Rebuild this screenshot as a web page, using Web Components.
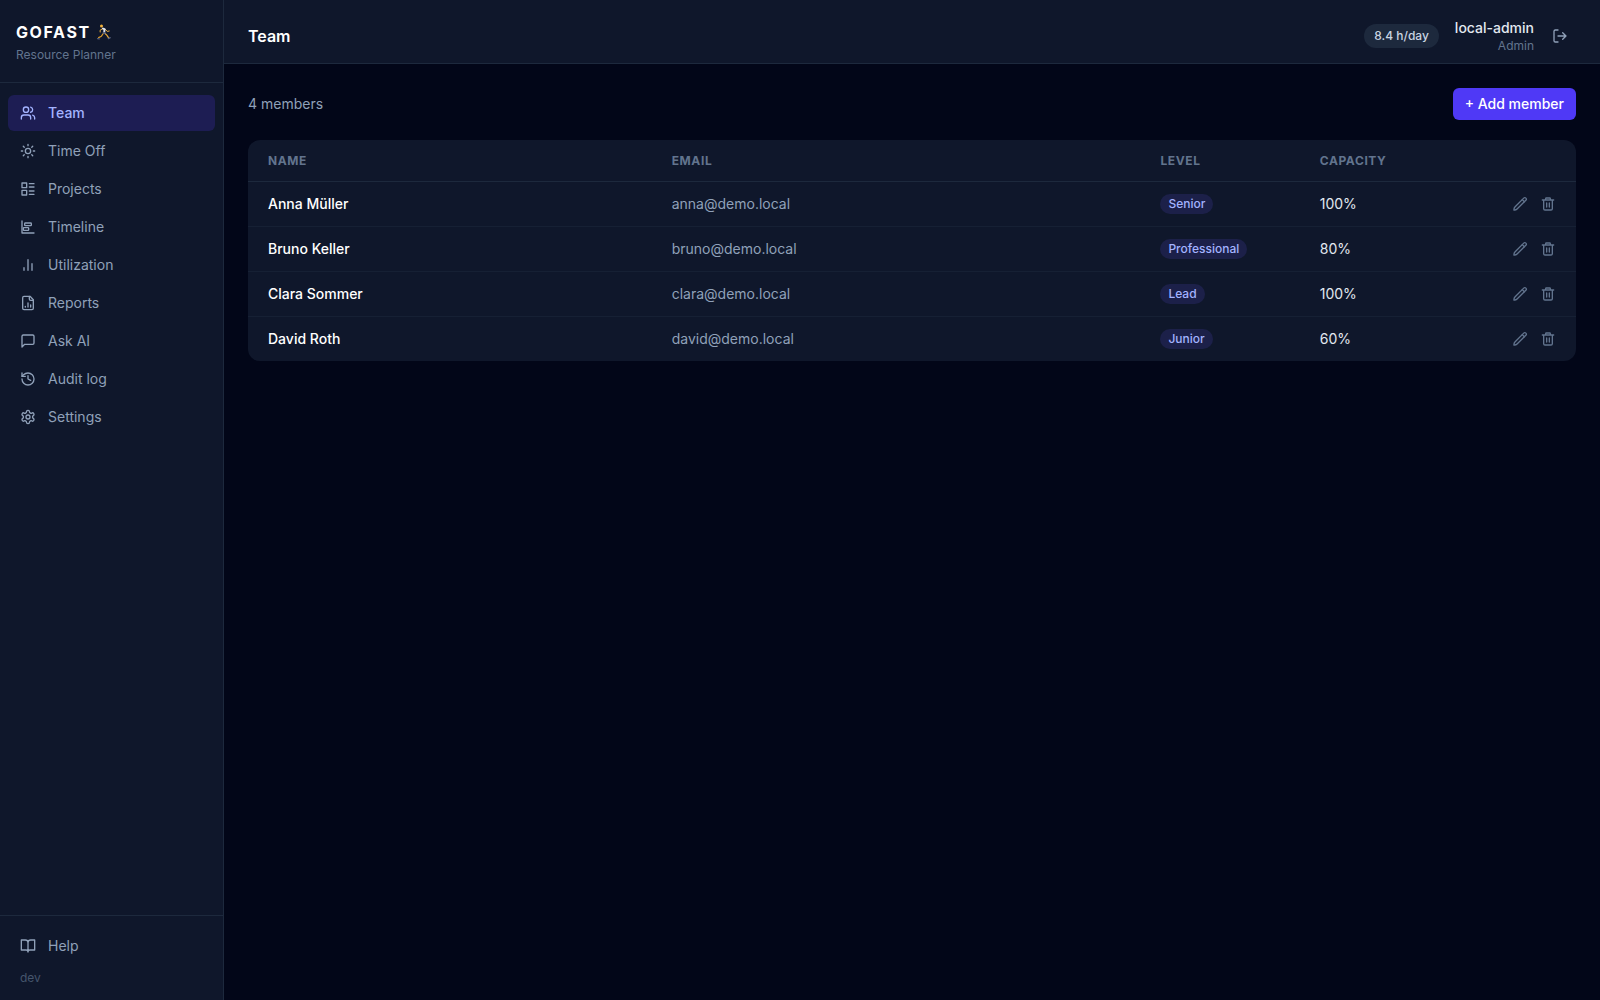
<!DOCTYPE html>
<html lang="en">
<head>
<meta charset="utf-8">
<title>Team - GOFAST Resource Planner</title>
<style>
  :root {
    --bg: #020618;
    --panel: #0f172b;
    --line: #1d293d;
    --text: #e2e8f0;
    --muted: #90a1b9;
    --dim: #62748e;
    --faint: #45556c;
    --accent: #4f39f6;
    --accent-text: #a3b3ff;
    --accent-bg: #1d1d53;
  }
  body {
    margin: 0;
    background: var(--bg);
    color: var(--text);
    font-family: Inter, "Liberation Sans", sans-serif;
    font-size: 14px;
    line-height: 20px;
    -webkit-font-smoothing: antialiased;
  }
</style>
</head>
<body>
<app-shell>
  <side-bar slot="sidebar">
    <nav-item icon="users" href="#team" active>Team</nav-item>
    <nav-item icon="sun" href="#time-off">Time Off</nav-item>
    <nav-item icon="projects" href="#projects">Projects</nav-item>
    <nav-item icon="timeline" href="#timeline">Timeline</nav-item>
    <nav-item icon="bars" href="#utilization">Utilization</nav-item>
    <nav-item icon="report" href="#reports">Reports</nav-item>
    <nav-item icon="chat" href="#ask">Ask AI</nav-item>
    <nav-item icon="history" href="#audit">Audit log</nav-item>
    <nav-item icon="settings" href="#settings">Settings</nav-item>
    <nav-item slot="footer" icon="book" href="#help">Help</nav-item>
    <span slot="version">dev</span>
  </side-bar>
  <top-bar slot="header" hours="8.4 h/day" user="local-admin" role-name="Admin">Team</top-bar>
  <team-page></team-page>
</app-shell>

<script>
const ICONS = {
  users: '<path d="M16 21v-2a4 4 0 0 0-4-4H6a4 4 0 0 0-4 4v2"/><circle cx="9" cy="7" r="4"/><path d="M22 21v-2a4 4 0 0 0-3-3.87"/><path d="M16 3.13a4 4 0 0 1 0 7.75"/>',
  sun: '<circle cx="12" cy="12" r="4"/><path d="M12 2v2M12 20v2M4.93 4.93l1.41 1.41M17.66 17.66l1.41 1.41M2 12h2M20 12h2M6.34 17.66l-1.41 1.41M19.07 4.93l-1.41 1.41"/>',
  projects: '<rect x="3" y="3" width="7" height="7"/><rect x="3" y="14" width="7" height="7"/><path d="M14 4h7M14 9h7M14 15h7M14 20h7"/>',
  timeline: '<path d="M3 3v18h18"/><rect x="7" y="6" width="10" height="4" rx="1"/><rect x="5" y="13" width="8" height="4" rx="1"/>',
  bars: '<path d="M6 20v-4M12 20V4M18 20V10"/>',
  report: '<path d="M15 2H6a2 2 0 0 0-2 2v16a2 2 0 0 0 2 2h12a2 2 0 0 0 2-2V7Z"/><path d="M14 2v4a2 2 0 0 0 2 2h4"/><path d="M8 18v-1M12 18v-6M16 18v-3"/>',
  chat: '<path d="M21 15a2 2 0 0 1-2 2H7l-4 4V5a2 2 0 0 1 2-2h14a2 2 0 0 1 2 2z"/>',
  history: '<path d="M3 12a9 9 0 1 0 9-9 9.75 9.75 0 0 0-6.74 2.74L3 8"/><path d="M3 3v5h5"/><path d="M12 7v5l4 2"/>',
  settings: '<path d="M12.22 2h-.44a2 2 0 0 0-2 2v.18a2 2 0 0 1-1 1.73l-.43.25a2 2 0 0 1-2 0l-.15-.08a2 2 0 0 0-2.73.73l-.22.38a2 2 0 0 0 .73 2.73l.15.1a2 2 0 0 1 1 1.72v.51a2 2 0 0 1-1 1.74l-.15.09a2 2 0 0 0-.73 2.73l.22.38a2 2 0 0 0 2.73.73l.15-.08a2 2 0 0 1 2 0l.43.25a2 2 0 0 1 1 1.73V20a2 2 0 0 0 2 2h.44a2 2 0 0 0 2-2v-.18a2 2 0 0 1 1-1.73l.43-.25a2 2 0 0 1 2 0l.15.08a2 2 0 0 0 2.73-.73l.22-.39a2 2 0 0 0-.73-2.73l-.15-.08a2 2 0 0 1-1-1.74v-.5a2 2 0 0 1 1-1.74l.15-.09a2 2 0 0 0 .73-2.73l-.22-.38a2 2 0 0 0-2.73-.73l-.15.08a2 2 0 0 1-2 0l-.43-.25a2 2 0 0 1-1-1.73V4a2 2 0 0 0-2-2z"/><circle cx="12" cy="12" r="3"/>',
  book: '<path d="M2 3h6a4 4 0 0 1 4 4v14a3 3 0 0 0-3-3H2zM22 3h-6a4 4 0 0 0-4 4v14a3 3 0 0 1 3-3h7z"/>',
  logout: '<path d="M9 21H5a2 2 0 0 1-2-2V5a2 2 0 0 1 2-2h4M16 17l5-5-5-5M21 12H9"/>',
  pencil: '<path d="M17.6 3.2a2.2 2.2 0 0 1 3.2 3.2L7.6 19.6c-1 1-3 1.6-4.6 1.5-.2-1.7.4-3.7 1.4-4.7Z"/><path d="m15.4 5.4 3.2 3.2"/>',
  trash: '<path d="M3.5 6h17M18.5 6v13a2 2 0 0 1-2 2h-9a2 2 0 0 1-2-2V6M8.5 6V4a1 1 0 0 1 1-1h5a1 1 0 0 1 1 1v2M10 10.5v6M14 10.5v6"/>'
};

class AppIcon extends HTMLElement {
  constructor() {
    super();
    this.attachShadow({ mode: 'open' });
  }

  connectedCallback() {
    this.shadowRoot.innerHTML = `
      <style>
        :host { display: block; flex: none; width: 16px; height: 16px; }
        svg { display: block; width: 100%; height: 100%; }
      </style>
      <svg viewBox="0 0 24 24" fill="none" stroke="currentColor" stroke-width="2"
        stroke-linecap="round" stroke-linejoin="round" aria-hidden="true">${ICONS[this.getAttribute('name')]}</svg>
    `;
  }
}

class AppShell extends HTMLElement {
  constructor() {
    super();
    this.attachShadow({ mode: 'open' });
    this.shadowRoot.innerHTML = `
      <style>
        :host { display: flex; min-height: 100vh; }
        .content { flex: 1; min-width: 0; display: flex; flex-direction: column; }
        main { flex: 1; padding: 24px; }
      </style>
      <slot name="sidebar"></slot>
      <div class="content">
        <slot name="header"></slot>
        <main><slot></slot></main>
      </div>
    `;
  }
}

class SideBar extends HTMLElement {
  constructor() {
    super();
    this.attachShadow({ mode: 'open' });
    this.shadowRoot.innerHTML = `
      <style>
        :host {
          display: flex;
          flex-direction: column;
          flex: none;
          box-sizing: border-box;
          width: 224px;
          background: var(--panel);
          border-right: 1px solid var(--line);
        }
        .brand {
          padding: 20px 16px 19px;
          border-bottom: 1px solid var(--line);
        }
        .name {
          display: flex;
          align-items: center;
          gap: 5px;
          color: #fff;
          font-size: 16px;
          font-weight: 700;
          line-height: 24px;
          letter-spacing: 0.1em;
        }
        .name svg { width: 16px; height: 16px; }
        .tagline {
          margin-top: 3px;
          color: var(--dim);
          font-size: 12px;
          line-height: 16px;
        }
        nav, .footer {
          display: flex;
          flex-direction: column;
          gap: 2px;
          padding: 12px 8px;
        }
        nav { flex: 1; }
        .footer { border-top: 1px solid var(--line); }
        .version {
          padding: 4px 12px 2px;
          color: var(--faint);
          font-size: 12px;
          line-height: 16px;
        }
      </style>
      <div class="brand">
        <div class="name">
          <span>GOFAST</span>
          <svg viewBox="0 0 16 16" fill="none" stroke-linecap="round" stroke-linejoin="round" aria-hidden="true">
            <path d="M7.6 9 5.4 12.2 2.6 13.6" stroke="#d99a2b" stroke-width="1.2"/>
            <path d="M8.6 9l2.2 2.2 2 3" stroke="#e8a93a" stroke-width="1.2"/>
            <path d="M6.6 4.6 4 6.4 4.2 8" stroke="#f0b23e" stroke-width="1"/>
            <path d="M9.4 5.4l1.8 2 2-.4" stroke="#f0b23e" stroke-width="1"/>
            <path d="M7 4.6l1.6.6-.4 3" stroke="#dfe6f2" stroke-width="2"/>
            <path d="M7.6 8.8l1 .3" stroke="#56617f" stroke-width="2"/>
            <path d="M1.6 14.6l1.6.2M12.4 14.6l1.8-.9" stroke="#56617f" stroke-width="1.3"/>
            <circle cx="5.5" cy="2" r="1.5" fill="#f2b13a"/>
          </svg>
        </div>
        <div class="tagline">Resource Planner</div>
      </div>
      <nav aria-label="Main"><slot></slot></nav>
      <div class="footer">
        <slot name="footer"></slot>
        <div class="version"><slot name="version"></slot></div>
      </div>
    `;
  }
}

class NavItem extends HTMLElement {
  constructor() {
    super();
    this.attachShadow({ mode: 'open' });
  }

  connectedCallback() {
    this.shadowRoot.innerHTML = `
      <style>
        :host { display: block; }
        a {
          display: flex;
          align-items: center;
          gap: 12px;
          padding: 8px 12px;
          border-radius: 6px;
          color: var(--muted);
          text-decoration: none;
        }
        a:hover { background: var(--line); }
        :host([active]) a {
          background: var(--accent-bg);
          color: var(--accent-text);
          font-weight: 500;
        }
      </style>
      <a href="${this.getAttribute('href')}">
        <app-icon name="${this.getAttribute('icon')}"></app-icon>
        <span><slot></slot></span>
      </a>
    `;
  }
}

class TopBar extends HTMLElement {
  constructor() {
    super();
    this.attachShadow({ mode: 'open' });
  }

  connectedCallback() {
    this.shadowRoot.innerHTML = `
      <style>
        :host {
          display: flex;
          align-items: center;
          justify-content: space-between;
          padding: 18px 24px 9px;
          background: var(--panel);
          border-bottom: 1px solid var(--line);
        }
        h1 {
          margin: 0;
          color: #fff;
          font-size: 16px;
          font-weight: 600;
          line-height: 24px;
        }
        .right { display: flex; align-items: center; gap: 16px; }
        .hours {
          padding: 4px 10px;
          border-radius: 12px;
          background: var(--line);
          color: #cad5e2;
          font-size: 12px;
          font-weight: 500;
          line-height: 16px;
        }
        .account { display: flex; align-items: center; gap: 10px; }
        .user { text-align: right; }
        .user strong { display: block; font-weight: 500; }
        .user small {
          display: block;
          color: var(--dim);
          font-size: 12px;
          line-height: 16px;
        }
        button {
          padding: 8px;
          border: none;
          border-radius: 6px;
          background: none;
          color: var(--muted);
          cursor: pointer;
        }
      </style>
      <h1><slot></slot></h1>
      <div class="right">
        <span class="hours">${this.getAttribute('hours')}</span>
        <div class="account">
          <div class="user">
            <strong>${this.getAttribute('user')}</strong>
            <small>${this.getAttribute('role-name')}</small>
          </div>
          <button type="button" aria-label="Log out"><app-icon name="logout"></app-icon></button>
        </div>
      </div>
    `;
  }
}

class MemberTable extends HTMLElement {
  constructor() {
    super();
    this._members = [];
    this.attachShadow({ mode: 'open' });
  }

  set members(list) {
    this._members = list;
    this.render();
  }

  get members() {
    return this._members;
  }

  render() {
    this.shadowRoot.innerHTML = `
      <style>
        :host {
          display: block;
          overflow: hidden;
          border-radius: 12px;
          background: var(--panel);
        }
        table {
          width: 100%;
          table-layout: fixed;
          border-collapse: collapse;
        }
        .col-name { width: 30.4%; }
        .col-email { width: 36.8%; }
        .col-level { width: 12%; }
        th {
          padding: 13px 20px 12px;
          color: var(--dim);
          font-size: 12px;
          font-weight: 700;
          line-height: 16px;
          letter-spacing: 0.05em;
          text-align: left;
          text-transform: uppercase;
        }
        td { padding: 12px 20px; }
        thead tr { border-bottom: 1px solid var(--line); }
        tbody tr + tr { border-top: 1px solid #162034; }
        .name { color: #fff; font-weight: 500; }
        .email { color: var(--muted); }
        .level {
          display: inline-block;
          padding: 2px 8px;
          border-radius: 10px;
          background: #1c2049;
          color: var(--accent-text);
          font-size: 12px;
          font-weight: 500;
          line-height: 16px;
          vertical-align: top;
        }
        .actions {
          display: flex;
          justify-content: flex-end;
          gap: 12px;
        }
        button {
          padding: 0;
          border: none;
          background: none;
          color: var(--dim);
          cursor: pointer;
        }
      </style>
      <table>
        <colgroup>
          <col class="col-name"><col class="col-email"><col class="col-level"><col>
          <col>
        </colgroup>
        <thead>
          <tr><th>Name</th><th>Email</th><th>Level</th><th>Capacity</th><td></td></tr>
        </thead>
        <tbody>
          ${this._members.map(m => `
            <tr>
              <td class="name">${m.name}</td>
              <td class="email">${m.email}</td>
              <td><span class="level">${m.level}</span></td>
              <td>${m.capacity}%</td>
              <td>
                <div class="actions">
                  <button type="button" aria-label="Edit ${m.name}"><app-icon name="pencil"></app-icon></button>
                  <button type="button" aria-label="Delete ${m.name}"><app-icon name="trash"></app-icon></button>
                </div>
              </td>
            </tr>
          `).join('')}
        </tbody>
      </table>
    `;
  }
}

class TeamPage extends HTMLElement {
  constructor() {
    super();
    this.attachShadow({ mode: 'open' });
  }

  connectedCallback() {
    const members = [
      { name: 'Anna Müller', email: 'anna@demo.local', level: 'Senior', capacity: 100 },
      { name: 'Bruno Keller', email: 'bruno@demo.local', level: 'Professional', capacity: 80 },
      { name: 'Clara Sommer', email: 'clara@demo.local', level: 'Lead', capacity: 100 },
      { name: 'David Roth', email: 'david@demo.local', level: 'Junior', capacity: 60 }
    ];

    this.shadowRoot.innerHTML = `
      <style>
        :host { display: flex; flex-direction: column; gap: 20px; }
        .toolbar {
          display: flex;
          align-items: center;
          justify-content: space-between;
        }
        .count { color: var(--muted); }
        button {
          padding: 6px 12px;
          border: none;
          border-radius: 6px;
          background: var(--accent);
          color: #fff;
          font: inherit;
          font-weight: 500;
          cursor: pointer;
        }
      </style>
      <div class="toolbar">
        <span class="count">${members.length} members</span>
        <button type="button">+ Add member</button>
      </div>
      <member-table></member-table>
    `;
    this.shadowRoot.querySelector('member-table').members = members;
  }
}

customElements.define('app-icon', AppIcon);
customElements.define('app-shell', AppShell);
customElements.define('side-bar', SideBar);
customElements.define('nav-item', NavItem);
customElements.define('top-bar', TopBar);
customElements.define('member-table', MemberTable);
customElements.define('team-page', TeamPage);
</script>
</body>
</html>
